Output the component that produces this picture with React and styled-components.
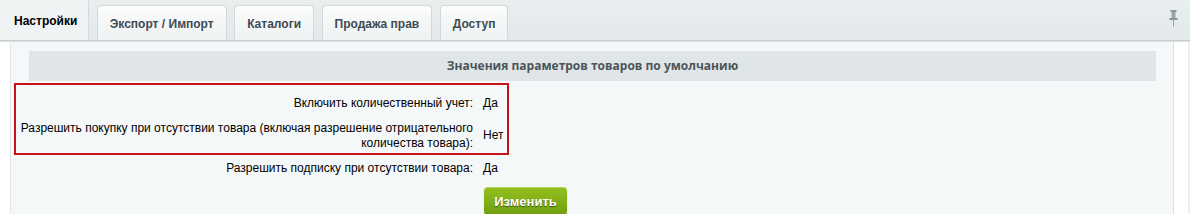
import styled, { createGlobalStyle } from "styled-components";

const GlobalStyle = createGlobalStyle`
  html, body {
    margin: 0;
    padding: 0;
    background: #ffffff;
  }
  body {
    font-family: "Liberation Sans", Arial, sans-serif;
    font-size: 12px;
    color: #000;
  }
`;

const tabs = ["Настройки", "Экспорт / Импорт", "Каталоги", "Продажа прав", "Доступ"];

const rows = [
  { label: "Включить количественный учет:", value: "Да" },
  {
    label: (
      <>
        Разрешить покупку при отсутствии товара (включая разрешение отрицательного
        <br />
        количества товара):
      </>
    ),
    value: "Нет",
  },
  { label: "Разрешить подписку при отсутствии товара:", value: "Да" },
];

export default function App() {
  return (
    <Page>
      <GlobalStyle />
      <TabBar>
        {tabs.map((t, i) => (
          <Tab key={t} active={i === 0}>
            {t}
          </Tab>
        ))}
        <Pin>
          <svg width="9" height="17" viewBox="0 0 9 17">
            <rect x="1.5" y="0" width="6" height="2" fill="#8a9396" />
            <rect x="2.5" y="2" width="4" height="6" fill="#9aa3a6" />
            <rect x="0.5" y="8" width="8" height="2" fill="#8a9396" />
            <rect x="4" y="10" width="1" height="7" fill="#9aa3a6" />
          </svg>
        </Pin>
      </TabBar>
      <Body>
        <Gutter />
        <Content>
          <Heading>Значения параметров товаров по умолчанию</Heading>
          <Table>
            <Highlight />
            {rows.map((r, i) => (
              <Row key={i}>
                <Label>
                  <span>{r.label}</span>
                </Label>
                <Value>{r.value}</Value>
              </Row>
            ))}
            <Row>
              <span />
              <ButtonCell>
                <Button>Изменить</Button>
              </ButtonCell>
            </Row>
          </Table>
        </Content>
        <Gutter right />
      </Body>
    </Page>
  );
}

const Page = styled.div`
  width: 1190px;
  height: 214px;
  overflow: hidden;
  display: flex;
  flex-direction: column;
`;

const TabBar = styled.div`
  display: flex;
  align-items: flex-end;
  gap: 7.5px;
  height: 40px;
  padding-right: 12px;
  background: linear-gradient(#e9eeef, #e3e9ea);
  border-bottom: 1px solid #c4cccd;
  box-shadow: 0 1px 0 #dfe5e6;
  flex-shrink: 0;
`;

const Tab = styled.div`
  display: flex;
  align-items: center;
  box-sizing: border-box;
  height: ${(p) => (p.active ? "40px" : "35px")};
  padding: ${(p) => (p.active ? "0 11px 0 13px" : "2px 12px 0")};
  font-family: "Liberation Sans", Arial, sans-serif;
  font-weight: bold;
  font-size: 12px;
  color: ${(p) => (p.active ? "#000" : "#3f4b54")};
  background: ${(p) =>
    p.active ? "#eff3f4" : "linear-gradient(#fbfcfc, #eef2f2)"};
  border: 1px solid ${(p) => (p.active ? "transparent" : "#d3d9da")};
  border-right-color: #d3d9da;
  border-bottom: none;
  border-radius: ${(p) => (p.active ? "0" : "4px 4px 0 0")};
`;

const Pin = styled.div`
  margin-left: auto;
  align-self: flex-start;
  margin-top: 10px;
  display: flex;
`;

const Body = styled.div`
  flex: 1;
  display: flex;
  margin-top: 1px;
`;

const Gutter = styled.div`
  width: ${(p) => (p.right ? "17px" : "11px")};
  background: #fff;
  border-left: ${(p) => (p.right ? "1px solid #dde3e4" : "none")};
  border-right: ${(p) => (p.right ? "2px solid #eceff0" : "1px solid #e2e7e8")};
  box-sizing: border-box;
`;

const Content = styled.div`
  flex: 1;
  background: #f5f8f9;
  padding: 9px 17px 0 18px;
`;

const Heading = styled.div`
  height: 30px;
  line-height: 30px;
  background: #e0e6e7;
  text-align: center;
  font-family: "Open Sans", "Liberation Sans", sans-serif;
  font-weight: bold;
  font-size: 12px;
  color: #4b5558;
`;

const Table = styled.div`
  position: relative;
  margin-top: 11px;
`;

const Highlight = styled.div`
  position: absolute;
  left: -15px;
  top: -9px;
  width: 495px;
  height: 72px;
  box-sizing: border-box;
  border: 2.5px solid #c8121a;
  pointer-events: none;
`;

const Row = styled.div`
  display: grid;
  grid-template-columns: 450px 1fr;
  align-items: center;
  line-height: 15.5px;
  padding: 4px 0 5px;
`;

const Label = styled.div`
  display: flex;
  justify-content: flex-end;
  text-align: right;
  white-space: nowrap;
  padding-right: 6px;
  color: #000;
`;

const Value = styled.div`
  padding-left: 4px;
  color: #000;
`;

const ButtonCell = styled.div`
  padding-left: 5px;
  padding-top: 2px;
`;

const Button = styled.button`
  width: 83px;
  height: 28px;
  border: none;
  border-radius: 4px;
  background: linear-gradient(#94c11f, #6f9e0f);
  box-shadow: 0 1px 1px rgba(0, 0, 0, 0.3), inset 0 1px 0 rgba(255, 255, 255, 0.3);
  font-family: "Liberation Sans", Arial, sans-serif;
  font-weight: bold;
  font-size: 13px;
  color: #fff;
  text-shadow: 0 1px 1px rgba(0, 0, 0, 0.5);
  cursor: pointer;
`;
